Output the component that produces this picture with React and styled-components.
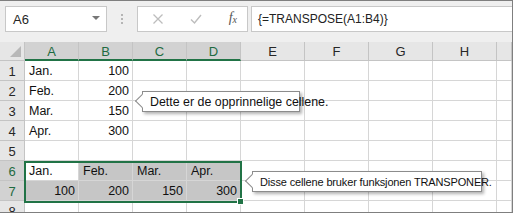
import React from 'react';
import styled, { createGlobalStyle } from 'styled-components';

const GlobalStyle = createGlobalStyle`
  body {
    margin: 0;
    background: #ffffff;
    font-family: "Liberation Sans", Arial, sans-serif;
  }
`;

const columns = [
  { id: 'A', w: 54, sel: true },
  { id: 'B', w: 54, sel: true },
  { id: 'C', w: 54, sel: true },
  { id: 'D', w: 54, sel: true },
  { id: 'E', w: 64 },
  { id: 'F', w: 64 },
  { id: 'G', w: 64 },
  { id: 'H', w: 64 },
  { id: '', w: 0 },
];

const rows = [
  { n: 1, cells: [{ v: 'Jan.' }, { v: '100', num: true }] },
  { n: 2, cells: [{ v: 'Feb.' }, { v: '200', num: true }] },
  { n: 3, cells: [{ v: 'Mar.' }, { v: '150', num: true }] },
  { n: 4, cells: [{ v: 'Apr.' }, { v: '300', num: true }] },
  { n: 5, cells: [] },
  {
    n: 6,
    sel: true,
    cells: [{ v: 'Jan.', active: true }, { v: 'Feb.' }, { v: 'Mar.' }, { v: 'Apr.' }],
  },
  {
    n: 7,
    sel: true,
    cells: [
      { v: '100', num: true },
      { v: '200', num: true },
      { v: '150', num: true },
      { v: '300', num: true },
    ],
  },
  { n: 8, cells: [] },
];

const App = () => {
  return (
    <>
      <GlobalStyle />
      <Window>
        <Toolbar>
          <NameBox>
            <span>A6</span>
            <DropArrow />
          </NameBox>
          <Grip>
            <i />
            <i />
            <i />
          </Grip>
          <FormulaButtons>
            <ToolIcon viewBox="0 0 12 12">
              <path d="M1.5 1.5 L10.5 10.5 M10.5 1.5 L1.5 10.5" stroke="#bdbdbd" strokeWidth="1.3" fill="none" />
            </ToolIcon>
            <ToolIcon viewBox="0 0 12 12">
              <path d="M1 6.5 L4.5 10 L11 2" stroke="#bdbdbd" strokeWidth="1.4" fill="none" />
            </ToolIcon>
            <Fx>
              f<sub>x</sub>
            </Fx>
          </FormulaButtons>
          <FormulaInput>{'{=TRANSPOSE(A1:B4)}'}</FormulaInput>
        </Toolbar>

        <SheetArea>
          <Sheet>
            <Corner>
              <CornerTriangle />
            </Corner>
            {columns.map((c, i) => (
              <ColHeader key={i} $sel={c.sel}>
                {c.id}
              </ColHeader>
            ))}
            {rows.map((r) => (
              <React.Fragment key={r.n}>
                <RowHeader $sel={r.sel}>{r.n}</RowHeader>
                {columns.map((c, i) => {
                  const cell = r.cells[i];
                  const inSel = r.sel && c.sel;
                  return (
                    <Cell
                      key={i}
                      $num={cell && cell.num}
                      $fill={inSel && !(cell && cell.active)}
                    >
                      {cell ? cell.v : ''}
                    </Cell>
                  );
                })}
              </React.Fragment>
            ))}
          </Sheet>

          <Selection>
            <FillHandle />
          </Selection>

          <Callout $left={142} $top={49} $width={158}>
            Dette er de opprinnelige cellene.
          </Callout>
          <Callout $left={252} $top={129} $width={230} $size={11} $tight>
            Disse cellene bruker funksjonen TRANSPONER.
          </Callout>
        </SheetArea>
      </Window>
    </>
  );
};

const Window = styled.div`
  width: 513px;
  height: 213px;
  box-sizing: border-box;
  border-top: 1px solid #7f7f7f;
  border-right: 1px solid #7f7f7f;
  border-bottom: 1px solid #7f7f7f;
  overflow: hidden;
  display: flex;
  flex-direction: column;
  background: #ffffff;
`;

const Toolbar = styled.div`
  height: 41px;
  flex-shrink: 0;
  box-sizing: border-box;
  background: #efefef;
  display: flex;
  align-items: flex-start;
  padding: 5px 0 0 5px;
`;

const Box = styled.div`
  height: 26px;
  box-sizing: border-box;
  background: #ffffff;
  border: 1px solid #c8c8c8;
  display: flex;
  align-items: center;
`;

const NameBox = styled(Box)`
  width: 102px;
  padding: 0 6px 0 7px;
  justify-content: space-between;
  font-size: 13px;
  color: #262626;
`;

const DropArrow = styled.div`
  width: 0;
  height: 0;
  border-left: 4px solid transparent;
  border-right: 4px solid transparent;
  border-top: 4px solid #777777;
  margin-top: -2px;
`;

const Grip = styled.div`
  width: 30px;
  height: 26px;
  display: flex;
  flex-direction: column;
  align-items: center;
  justify-content: center;
  gap: 2px;

  i {
    width: 2px;
    height: 2px;
    background: #b5b5b5;
  }
`;

const FormulaButtons = styled(Box)`
  width: 111px;
  padding: 0 10px 0 14px;
  justify-content: space-between;
`;

const ToolIcon = styled.svg`
  width: 12px;
  height: 12px;
`;

const Fx = styled.span`
  font-family: "Liberation Serif", "Times New Roman", serif;
  font-style: italic;
  font-size: 14px;
  color: #555555;
  margin-top: -2px;

  sub {
    font-size: 10px;
    vertical-align: -1px;
  }
`;

const FormulaInput = styled(Box)`
  flex: 1;
  margin-left: 3px;
  border-right: none;
  padding-left: 6px;
  font-size: 12px;
  color: #222222;
`;

const SheetArea = styled.div`
  position: relative;
  flex: 1;
  overflow: hidden;
`;

const Sheet = styled.div`
  display: grid;
  grid-template-columns: 25px repeat(4, 54px) repeat(4, 64px) 1fr;
  grid-template-rows: 19px;
  grid-auto-rows: 20px;
`;

const HeaderBase = styled.div`
  box-sizing: border-box;
  display: flex;
  align-items: center;
  justify-content: center;
  background: #e6e6e6;
  border-right: 1px solid #c4c4c4;
  border-bottom: 1px solid #c4c4c4;
`;

const Corner = styled(HeaderBase)`
  position: relative;
`;

const CornerTriangle = styled.div`
  position: absolute;
  right: 3px;
  bottom: 3px;
  width: 0;
  height: 0;
  border-left: 11px solid transparent;
  border-bottom: 11px solid #b8b8b8;
`;

const ColHeader = styled(HeaderBase)`
  font-size: 13px;
  padding-top: 1px;
  color: ${(p) => (p.$sel ? '#1e6b41' : '#262626')};
  background: ${(p) => (p.$sel ? '#d2d2d2' : '#e6e6e6')};
  border-bottom: ${(p) => (p.$sel ? '2px solid #217346' : '1px solid #c4c4c4')};
`;

const RowHeader = styled(HeaderBase)`
  font-size: 13px;
  color: ${(p) => (p.$sel ? '#1e6b41' : '#262626')};
  background: ${(p) => (p.$sel ? '#d2d2d2' : '#e6e6e6')};
  padding-top: 1px;
`;

const Cell = styled.div`
  box-sizing: border-box;
  border-right: 1px solid #d6d6d6;
  border-bottom: 1px solid #d6d6d6;
  display: flex;
  align-items: flex-end;
  justify-content: ${(p) => (p.$num ? 'flex-end' : 'flex-start')};
  padding: 0 3px 2px 4px;
  font-size: 12.5px;
  color: #111111;
  white-space: nowrap;
  background: ${(p) => (p.$fill ? '#c6c6c6' : '#ffffff')};
`;

const Selection = styled.div`
  position: absolute;
  left: 24px;
  top: 119px;
  width: 218px;
  height: 42px;
  box-sizing: border-box;
  border: 2px solid #217346;
  pointer-events: none;
`;

const FillHandle = styled.div`
  position: absolute;
  right: -4px;
  bottom: -4px;
  width: 5px;
  height: 5px;
  background: #217346;
  border: 1px solid #ffffff;
`;

const Callout = styled.div`
  position: absolute;
  left: ${(p) => p.$left}px;
  top: ${(p) => p.$top}px;
  width: ${(p) => p.$width}px;
  height: 21px;
  box-sizing: border-box;
  background: #ffffff;
  border: 1px solid #8c8c8c;
  box-shadow: 2px 2px 3px rgba(0, 0, 0, 0.3);
  display: flex;
  align-items: center;
  padding-left: 7px;
  font-size: ${(p) => p.$size || 12.4}px;
  letter-spacing: ${(p) => (p.$tight ? '-0.15px' : 'normal')};
  color: #111111;
  white-space: nowrap;

  &::before {
    content: '';
    position: absolute;
    left: -6px;
    top: 4px;
    width: 9px;
    height: 9px;
    background: #ffffff;
    border-left: 1px solid #8c8c8c;
    border-bottom: 1px solid #8c8c8c;
    transform: rotate(45deg);
  }
`;

export default App;
